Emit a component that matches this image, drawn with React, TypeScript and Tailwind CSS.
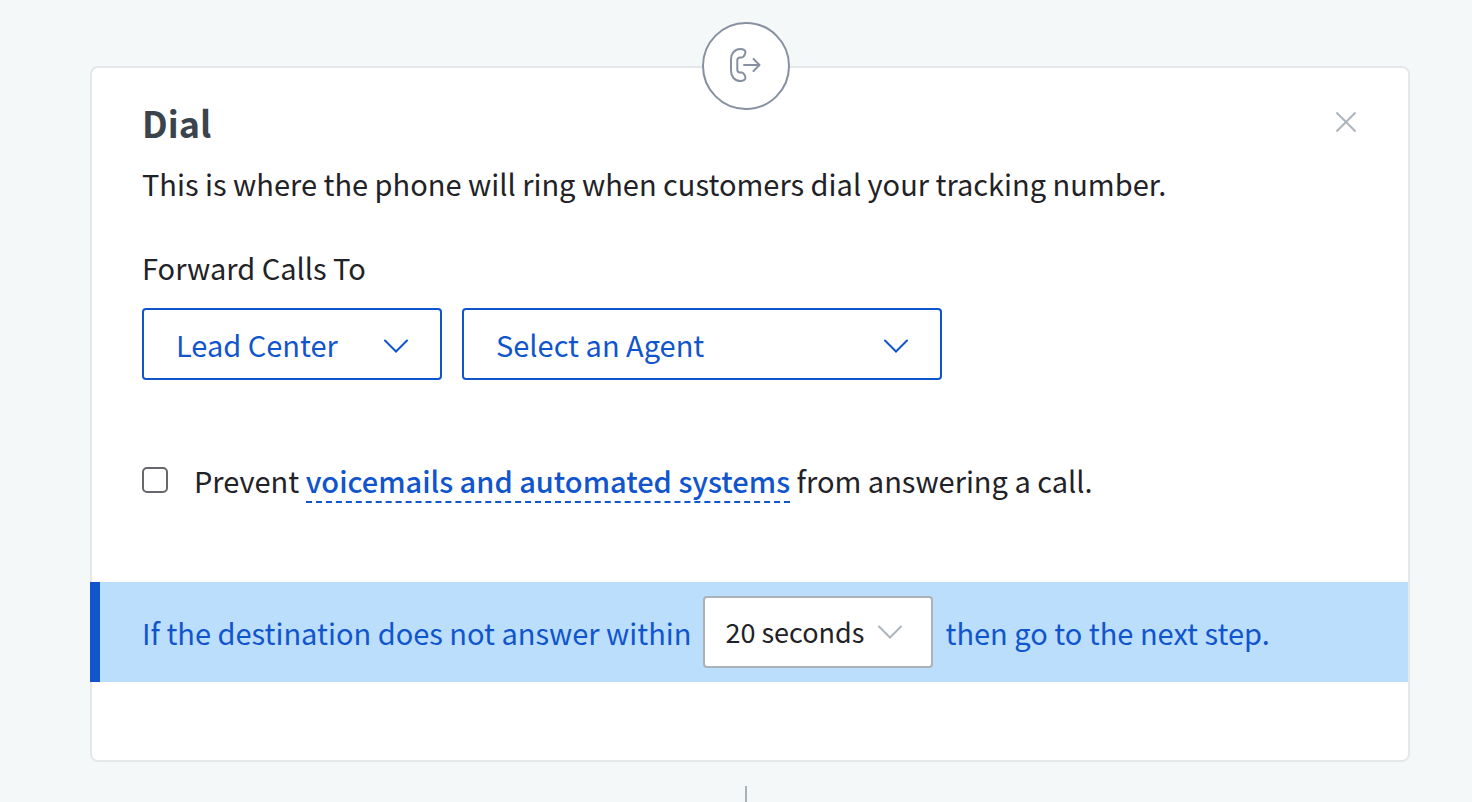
import { useState } from "react";

type DropdownProps = {
  label: string;
  options: string[];
  className: string;
  iconClassName: string;
};

const Dropdown = ({
  label,
  options,
  className,
  iconClassName,
}: DropdownProps) => {
  const [value, setValue] = useState<string>(options[0]);

  return (
    <div className="relative max-w-full">
      <select
        aria-label={label}
        value={value}
        onChange={(e) => setValue(e.target.value)}
        className={`block h-[72px] max-w-full appearance-none rounded-sm border-2 bg-white outline-none ${className}`}
      >
        {options.map((option) => (
          <option key={option}>{option}</option>
        ))}
      </select>
      <svg
        viewBox="0 0 26 14"
        fill="none"
        stroke="currentColor"
        strokeWidth="2"
        strokeLinecap="round"
        className={`pointer-events-none absolute h-[14px] w-[26px] ${iconClassName}`}
      >
        <path d="M2 1.500l11 11 11-11" />
      </svg>
    </div>
  );
};

const DialIcon = () => (
  <svg
    viewBox="0 0 32 36"
    fill="none"
    stroke="currentColor"
    strokeWidth="2"
    strokeLinecap="round"
    strokeLinejoin="round"
    className="h-9 w-8"
  >
    <path d="M10.500 1C4.500 1 1 5.500 1 11.500v11C1 28.500 4.500 33 10.500 33c3 0 5.500-1.600 4.900-3.800-.3-1.300-.9-2.400-1.700-3.500-.5-.8-1.100-1.200-2-1.200H10c-1.700 0-2.700-1-2.700-2.700v-9.600c0-1.700 1-2.700 2.700-2.700h1.700c.9 0 1.500-.4 2-1.200.8-1.100 1.400-2.200 1.700-3.500C16 2.600 13.500 1 10.500 1z" />
    <path d="M14 17h15.500M23.500 11l6 6-6 6" />
  </svg>
);

const App = () => {
  const [prevent, setPrevent] = useState<boolean>(false);

  return (
    <main className="flex min-h-screen flex-col items-center bg-[#f4f8f9] pt-[22px] pl-5 font-['Noto_Sans_CJK_JP',sans-serif] text-[29px] leading-10 text-[#1f2226]">
      <div className="relative z-10 -mb-11 flex size-22 shrink-0 items-center justify-center rounded-full border-2 border-[#8790a0] bg-white text-[#8790a0]">
        <DialIcon />
      </div>

      <div className="self-stretch pr-[62px] pl-[70px]">
        <section className="rounded-lg border-2 border-[#e5e8eb] bg-white pt-[30px] pb-[78px]">
          <div className="px-[50px]">
            <div className="flex items-center justify-between">
              <h1 className="text-4xl leading-12 font-bold text-[#3b444d]">
                Dial
              </h1>
              <button type="button" aria-label="Close" className="p-0.5">
                <svg
                  viewBox="0 0 20 20"
                  fill="none"
                  stroke="#acb4bc"
                  strokeWidth="2"
                  className="size-5"
                >
                  <path d="M.5.5l19 19M19.500.5l-19 19" />
                </svg>
              </button>
            </div>
            <p className="mt-[17px]">
              This is where the phone will ring when customers dial your
              tracking number.
            </p>

            <p className="mt-11">Forward Calls To</p>
            <div className="mt-[21px] flex flex-wrap gap-5">
              <Dropdown
                label="Forward calls to"
                options={["Lead Center"]}
                className="w-[300px] border-[#1155cc] pl-8 text-[#1155cc]"
                iconClassName="top-[31px] right-[33px] text-[#1155cc]"
              />
              <Dropdown
                label="Agent"
                options={["Select an Agent"]}
                className="w-[480px] border-[#1155cc] pl-8 text-[#1155cc]"
                iconClassName="top-[31px] right-[33px] text-[#1155cc]"
              />
            </div>

            <div className="mt-20 flex items-center">
              <input
                id="prevent"
                type="checkbox"
                checked={prevent}
                onChange={(e) => setPrevent(e.target.checked)}
                className="mr-[26px] size-[26px] shrink-0 appearance-none rounded-[5px] border-2 border-[#66676a] bg-white checked:bg-[#1155cc]"
              />
              <label htmlFor="prevent">
                Prevent{" "}
                <a
                  href="#voicemails"
                  className="border-b-2 border-dashed border-[#1155cc] font-medium text-[#1155cc]"
                >
                  voicemails and automated systems
                </a>{" "}
                from answering a call.
              </label>
            </div>
          </div>

          <div className="mt-[82px] -ml-0.5 flex min-h-[100px] flex-wrap items-center gap-3 border-l-10 border-[#1155cc] bg-[#bbdefd] pl-[42px] text-[#1155cc]">
            <span>If the destination does not answer within</span>
            <Dropdown
              label="Ring time"
              options={["20 seconds"]}
              className="w-[230px] border-[#acb1b7] pl-5 text-[27px] text-[#1f2226]"
              iconClassName="top-[29px] right-[30px] text-[#acb4bc]"
            />
            <span>then go to the next step.</span>
          </div>
        </section>
      </div>

      <div className="mt-6 w-0.5 flex-1 bg-[#a9b1ba]" />
    </main>
  );
};

export default App;
